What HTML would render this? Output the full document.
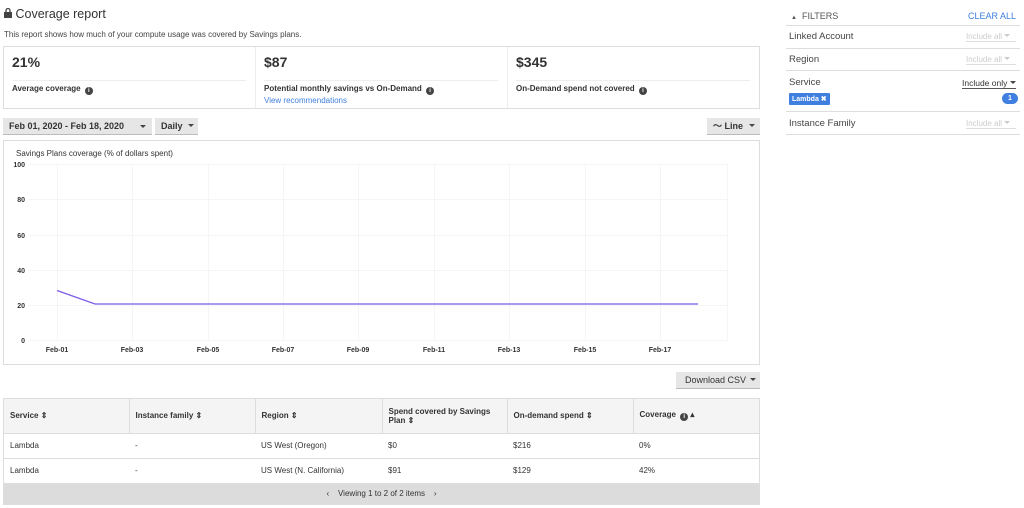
<!DOCTYPE html>
<html><head><meta charset="utf-8"><style>
*{box-sizing:border-box;margin:0;padding:0}
body{width:1024px;height:508px;background:#fff;font-family:"Liberation Sans",Arial,sans-serif;color:#333;position:relative;overflow:hidden;font-size:9px}
.a{position:absolute}
.info{display:inline-block;width:8px;height:8px;border-radius:50%;background:#444;color:#fff;font-size:6px;line-height:8px;text-align:center;font-weight:bold;vertical-align:-1px;margin-left:2px}
.btn{position:absolute;background:#e6e6e6;border-bottom:1px solid #bbb;font-size:9px;font-weight:bold;color:#333;line-height:16px;padding-left:6px}
.caret{display:inline-block;width:0;height:0;border-left:3px solid transparent;border-right:3px solid transparent;border-top:3px solid #444;vertical-align:2px}
.fl{position:absolute;left:789px;font-size:9.5px;color:#444}
.fr{position:absolute;right:8px;font-size:8px;color:#ccc;border-bottom:1px solid #ddd;width:50px}
.hr{position:absolute;left:786px;width:234px;height:1px;background:#ddd}
table{border-collapse:collapse;width:755px;font-size:8px;table-layout:fixed}
th{background:#f4f4f4;text-align:left;font-weight:bold;height:34px;padding:0 6px;border-left:1px solid #ddd;vertical-align:middle}
td{height:25px;padding:0 6px;border-top:1px solid #ddd}
</style></head><body>
<div class="a" style="left:4px;top:7px;font-size:12.5px;color:#333"><svg width="8" height="10" viewBox="0 0 8 10" style="vertical-align:0"><rect x="0" y="4" width="8" height="6" fill="#444"/><path d="M2 4V2.5a2 2 0 0 1 4 0V4" stroke="#444" stroke-width="1.3" fill="none"/></svg> Coverage report</div>
<div class="a" style="left:4px;top:30px;font-size:8px;color:#444">This report shows how much of your compute usage was covered by Savings plans.</div>
<div class="a" style="left:3px;top:46px;width:757px;height:63px;border:1px solid #ddd"></div>
<div class="a" style="left:255px;top:47px;width:1px;height:61px;background:#eee"></div>
<div class="a" style="left:507px;top:47px;width:1px;height:61px;background:#eee"></div>
<div class="a" style="left:12px;top:54px;font-size:14px;font-weight:bold">21%</div>
<div class="a" style="left:12px;top:80px;width:234px;height:1px;background:#eee"></div>
<div class="a" style="left:12px;top:84px;font-size:8px;font-weight:bold">Average coverage <span class="info">i</span></div>
<div class="a" style="left:264px;top:54px;font-size:14px;font-weight:bold">$87</div>
<div class="a" style="left:264px;top:80px;width:234px;height:1px;background:#eee"></div>
<div class="a" style="left:264px;top:84px;font-size:8px;font-weight:bold">Potential monthly savings vs On-Demand <span class="info">i</span></div>
<div class="a" style="left:264px;top:96px;font-size:8px;color:#3f7fe0">View recommendations</div>
<div class="a" style="left:516px;top:54px;font-size:14px;font-weight:bold">$345</div>
<div class="a" style="left:516px;top:80px;width:234px;height:1px;background:#eee"></div>
<div class="a" style="left:516px;top:84px;font-size:8px;font-weight:bold">On-Demand spend not covered <span class="info">i</span></div>
<div class="btn" style="left:3px;top:118px;width:149px;height:17px">Feb 01, 2020 - Feb 18, 2020<span class="caret a" style="right:6px;top:7px"></span></div>
<div class="btn" style="left:155px;top:118px;width:43px;height:17px">Daily <span class="caret" style="margin-left:3px"></span></div>
<div class="btn" style="left:707px;top:118px;width:53px;height:17px">〜 Line <span class="caret" style="margin-left:3px"></span></div>
<div class="a" style="left:3px;top:140px;width:757px;height:225px;border:1px solid #ddd"></div>
<div class="a" style="left:16px;top:149px;font-size:8px">Savings Plans coverage (% of dollars spent)</div>
<svg class="a" style="left:0;top:140px" width="760" height="225" viewBox="0 140 760 225" font-family="Liberation Sans,Arial,sans-serif" font-size="7" font-weight="bold" fill="#333">
<g stroke="#f5f5f5" stroke-width="1">
<line x1="28" y1="164.5" x2="727" y2="164.5"/><line x1="28" y1="199.5" x2="727" y2="199.5"/><line x1="28" y1="235.5" x2="727" y2="235.5"/><line x1="28" y1="270.5" x2="727" y2="270.5"/><line x1="28" y1="305.5" x2="727" y2="305.5"/><line x1="28" y1="340.5" x2="727" y2="340.5"/>
<line x1="57.5" y1="164" x2="57.5" y2="341"/><line x1="132.5" y1="164" x2="132.5" y2="341"/><line x1="208.5" y1="164" x2="208.5" y2="341"/><line x1="283.5" y1="164" x2="283.5" y2="341"/><line x1="358.5" y1="164" x2="358.5" y2="341"/><line x1="434.5" y1="164" x2="434.5" y2="341"/><line x1="509.5" y1="164" x2="509.5" y2="341"/><line x1="585.5" y1="164" x2="585.5" y2="341"/><line x1="660.5" y1="164" x2="660.5" y2="341"/><line x1="727.5" y1="164" x2="727.5" y2="341"/>
</g>
<g text-anchor="end"><text x="25" y="167">100</text><text x="25" y="202">80</text><text x="25" y="238">60</text><text x="25" y="273">40</text><text x="25" y="308">20</text><text x="25" y="343">0</text></g>
<g text-anchor="middle"><text x="57" y="352">Feb-01</text><text x="132" y="352">Feb-03</text><text x="208" y="352">Feb-05</text><text x="283" y="352">Feb-07</text><text x="358" y="352">Feb-09</text><text x="434" y="352">Feb-11</text><text x="509" y="352">Feb-13</text><text x="585" y="352">Feb-15</text><text x="660" y="352">Feb-17</text></g>
<polyline points="57,290.5 95,304 698,304" fill="none" stroke="#7b5ce8" stroke-width="1.3"/>
</svg>
<div class="btn" style="left:676px;top:372px;width:84px;height:17px;font-weight:normal;padding-left:9px">Download CSV <span class="caret" style="margin-left:1px"></span></div>
<div class="a" style="left:3px;top:398px;width:757px;border:1px solid #ddd">
<table>
<colgroup><col style="width:125px"><col style="width:126px"><col style="width:127px"><col style="width:125px"><col style="width:126px"><col></colgroup>
<tr><th style="border-left:none">Service ⇕</th><th>Instance family ⇕</th><th>Region ⇕</th><th>Spend covered by Savings<br>Plan ⇕</th><th>On-demand spend ⇕</th><th>Coverage <span class="info">i</span> ▴</th></tr>
<tr><td>Lambda</td><td>-</td><td>US West (Oregon)</td><td>$0</td><td>$216</td><td>0%</td></tr>
<tr><td>Lambda</td><td>-</td><td>US West (N. California)</td><td>$91</td><td>$129</td><td>42%</td></tr>
<tr><td colspan="6" style="background:#dcdcdc;text-align:center;height:21px">‹ &nbsp;&nbsp; Viewing 1 to 2 of 2 items &nbsp;&nbsp; ›</td></tr>
</table></div>
<div class="a" style="left:791px;top:11px;font-size:9px;color:#555"><span style="font-size:6px">▲</span> &nbsp;FILTERS</div>
<div class="a" style="right:8px;top:11px;font-size:9px;color:#3f7fe0">CLEAR ALL</div>
<div class="hr" style="top:25px"></div>
<div class="fl" style="top:31px">Linked Account</div><div class="fr" style="top:32px">Include all <span class="caret" style="border-top-color:#ccc"></span></div>
<div class="hr" style="top:48px"></div>
<div class="fl" style="top:54px">Region</div><div class="fr" style="top:55px">Include all <span class="caret" style="border-top-color:#ccc"></span></div>
<div class="hr" style="top:70px"></div>
<div class="fl" style="top:77px">Service</div><div class="fr" style="top:78px;color:#333;border-bottom-color:#555;font-size:8.5px;width:54px">Include only <span class="caret"></span></div>
<div class="a" style="left:789px;top:93px;background:#3f7fe0;color:#fff;font-size:7px;font-weight:bold;padding:2px 3px;border-radius:1px">Lambda ✖</div>
<div class="a" style="left:1002px;top:93px;width:16px;height:11px;border-radius:6px;background:#3f7fe0;color:#fff;font-size:7px;text-align:center;line-height:11px;font-weight:bold">1</div>
<div class="hr" style="top:111px"></div>
<div class="fl" style="top:118px">Instance Family</div><div class="fr" style="top:119px">Include all <span class="caret" style="border-top-color:#ccc"></span></div>
<div class="hr" style="top:134px"></div>
</body></html>
